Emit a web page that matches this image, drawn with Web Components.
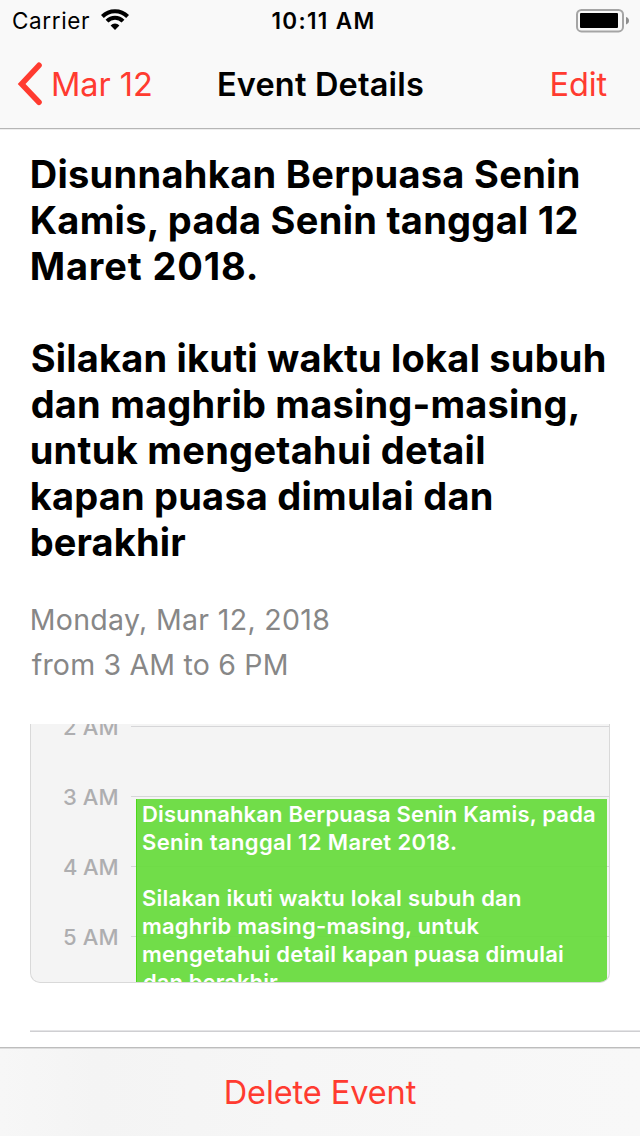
<!DOCTYPE html>
<html lang="id">
<head>
<meta charset="utf-8">
<title>Event Details</title>
<style>
  body { margin: 0; background: #fff; font-family: Inter, "Liberation Sans", sans-serif; color: #000; }
</style>
</head>
<body>
<event-screen></event-screen>
<script>
const define = (name, html, setup) => {
  const template = document.createElement('template');
  template.innerHTML = html;
  customElements.define(name, class extends HTMLElement {
    constructor() {
      super();
      this.attachShadow({ mode: 'open' }).append(template.content.cloneNode(true));
    }
    connectedCallback() { if (setup) setup(this); }
  });
};

// One line of text whose tracking is adjusted so its glyphs span `span` pixels.
const pen = document.createElement('canvas').getContext('2d');
define('text-line', `<style>
  :host { display: block; white-space: pre; }
  span { display: block; }
</style><span><slot></slot></span>`, el => {
  const span = parseFloat(el.getAttribute('span'));
  if (!span) return;
  const cs = getComputedStyle(el), text = el.textContent;
  pen.font = `${cs.fontWeight} ${cs.fontSize} ${cs.fontFamily}`;
  const m = pen.measureText(text);
  const ink = m.actualBoundingBoxLeft + m.actualBoundingBoxRight;
  const inner = el.shadowRoot.querySelector('span');
  const track = (span - ink) / (text.length - 1);
  inner.style.letterSpacing = track + 'px';
  inner.style.marginLeft = m.actualBoundingBoxLeft + 'px';
  inner.style.width = (m.width + track * text.length) + 'px';
});

define('wifi-icon', `<style>:host { display: block; } svg { display: block; }</style>
<svg width="28" height="21" viewBox="0 0 28 21" fill="none" stroke="#000" stroke-width="4">
  <path d="M1.400 7.500 A17.700 17.700 0 0 1 26.600 7.500"/>
  <path d="M6 12.200 A11.200 11.200 0 0 1 22 12.200"/>
  <path d="M14 20.900 L9.600 16.400 A6.200 6.200 0 0 1 18.400 16.400 Z" fill="#000" stroke="none"/>
</svg>`);

define('battery-icon', `<style>:host { display: block; } svg { display: block; }</style>
<svg width="54" height="24" viewBox="0 0 54 24">
  <rect x="1" y="1" width="46" height="21.400" rx="4.500" fill="none" stroke="#a5a5a5" stroke-width="2"/>
  <rect x="4" y="4" width="38" height="15" rx="1" fill="#000"/>
  <path d="M50 8 Q53 9 53 11.700 Q53 14.400 50 15.400 Z" fill="#8e8e8e"/>
</svg>`);

define('status-bar', `<style>
  :host { display: grid; grid-template-columns: 1fr auto 1fr; height: 42px; font-size: 22.500px; line-height: 42px; }
  .left { display: flex; padding-left: 13px; gap: 11px; }
  wifi-icon { margin-top: 9px; }
  .time { font-weight: 600; padding-left: 8px; }
  .right { display: flex; justify-content: flex-end; padding: 9px 10px 0 0; }
</style>
<div class="left"><text-line span="76">Carrier</text-line><wifi-icon></wifi-icon></div>
<text-line class="time" span="101">10:11 AM</text-line>
<div class="right"><battery-icon></battery-icon></div>`);

define('nav-bar', `<style>
  :host { display: grid; grid-template-columns: 1fr auto 1fr; height: 86px; font-size: 32.500px; line-height: 86px; border-bottom: 1px solid #b6b6b6; box-shadow: 0 1px #eee; }
  .back, .edit { display: flex; color: #ff3b30; }
  .back { padding-left: 17px; gap: 11px; }
  .edit { justify-content: flex-end; padding-right: 33px; }
  svg { margin-top: 19px; display: block; }
  .title { font-weight: 600; padding-left: 3px; }
</style>
<div class="back"><svg width="25" height="46" viewBox="0 0 25 46" fill="none" stroke="#ff3b30" stroke-width="5.600" stroke-linecap="round" stroke-linejoin="miter"><path d="M22 4.300 L4.600 23 L22 41.300"/></svg>
<text-line span="98">Mar 12</text-line></div>
<text-line class="title" span="204">Event Details</text-line>
<div class="edit"><text-line span="55">Edit</text-line></div>`);

define('event-summary', `<style>
  :host { display: block; padding: 22px 0 0 31.700px; }
  .title { font-size: 38px; line-height: 46px; font-weight: 650; }
  .when { margin-top: 32px; font-size: 28.500px; line-height: 45px; color: #878787; }
  .blank { height: 46px; }
</style>
<div class="title">
<text-line span="547">Disunnahkan Berpuasa Senin</text-line>
<text-line span="546">Kamis, pada Senin tanggal 12</text-line>
<text-line span="224">Maret 2018.</text-line>
<div class="blank"></div>
<text-line span="573">Silakan ikuti waktu lokal subuh</text-line>
<text-line span="546">dan maghrib masing-masing,</text-line>
<text-line span="451.500">untuk mengetahui detail</text-line>
<text-line span="460">kapan puasa dimulai dan</text-line>
<text-line span="153.500">berakhir</text-line>
</div>
<div class="when">
<text-line span="296.500">Monday, Mar 12, 2018</text-line>
<text-line span="255">from 3 AM to 6 PM</text-line>
</div>`);

define('hour-row', `<style>
  :host { display: flex; height: 70px; }
  .label { width: 100px; line-height: 28px; font-size: 22px; font-weight: 550; color: #aeaeb0; }
  .label text-line { margin-left: 33px; }
  .rule { flex: 1; height: 1px; margin-top: 13px; background: #d6d6d8; }
</style><div class="label"></div><div class="rule"></div>`, el => {
  el.shadowRoot.querySelector('.label').innerHTML = `<text-line span="53.500">${el.getAttribute('hour')}</text-line>`;
});

define('day-timeline', `<style>
  :host { display: block; position: relative; box-sizing: border-box; width: 580px; height: 259px; margin: 37px 0 0 30px; overflow: hidden;
    background: #f4f4f4; border: 1px solid #d9d9d9; border-top: 0; border-radius: 0 0 10px 10px; }
  .hours { margin-top: -11px; }
  .event { position: absolute; left: 105px; top: 75px; width: 471px; height: 184px; box-sizing: border-box; padding: 1px 0 0 6px;
    background: rgba(104,219,62,.94); border-left: 1px solid #4cd81b; color: #fff; font-size: 22px; line-height: 28px; font-weight: 600; overflow: hidden; }
  .blank { height: 28px; }
</style>
<div class="hours"><hour-row hour="2 AM"></hour-row><hour-row hour="3 AM"></hour-row><hour-row hour="4 AM"></hour-row><hour-row hour="5 AM"></hour-row></div>
<div class="event">
<text-line span="452.500">Disunnahkan Berpuasa Senin Kamis, pada</text-line>
<text-line span="313">Senin tanggal 12 Maret 2018.</text-line>
<div class="blank"></div>
<text-line span="377">Silakan ikuti waktu lokal subuh dan</text-line>
<text-line span="337">maghrib masing-masing, untuk</text-line>
<text-line span="420">mengetahui detail kapan puasa dimulai</text-line>
<text-line span="135">dan berakhir</text-line>
</div>`);

define('bottom-toolbar', `<style>
  :host { display: flex; justify-content: center; box-sizing: border-box; height: 89px; padding: 2px 0 0 2px; border-top: 1px solid #bdbdbd; box-shadow: inset 0 1px #dedede;
    background: linear-gradient(90deg, #f7f7f7, #f4f4f4 15%, #f6f6f6 45%, #f8f8f8); color: #ff3b30; font-size: 32.500px; line-height: 86px; }
</style><text-line span="190">Delete Event</text-line>`);

define('event-screen', `<style>
  :host { display: flex; flex-direction: column; width: 640px; height: 1136px; overflow: hidden; background: #fff; }
  header { background: #f9f9f9; }
  main { flex: 1; min-height: 0; }
  hr { border: 0; height: 1px; margin: 47px 0 0 30px; background: #e4e4e6; border-bottom: 1px solid #cfcfd2; }
</style>
<header><status-bar></status-bar><nav-bar></nav-bar></header>
<main><event-summary></event-summary><day-timeline></day-timeline><hr></main>
<bottom-toolbar></bottom-toolbar>`);
</script>
</body>
</html>
